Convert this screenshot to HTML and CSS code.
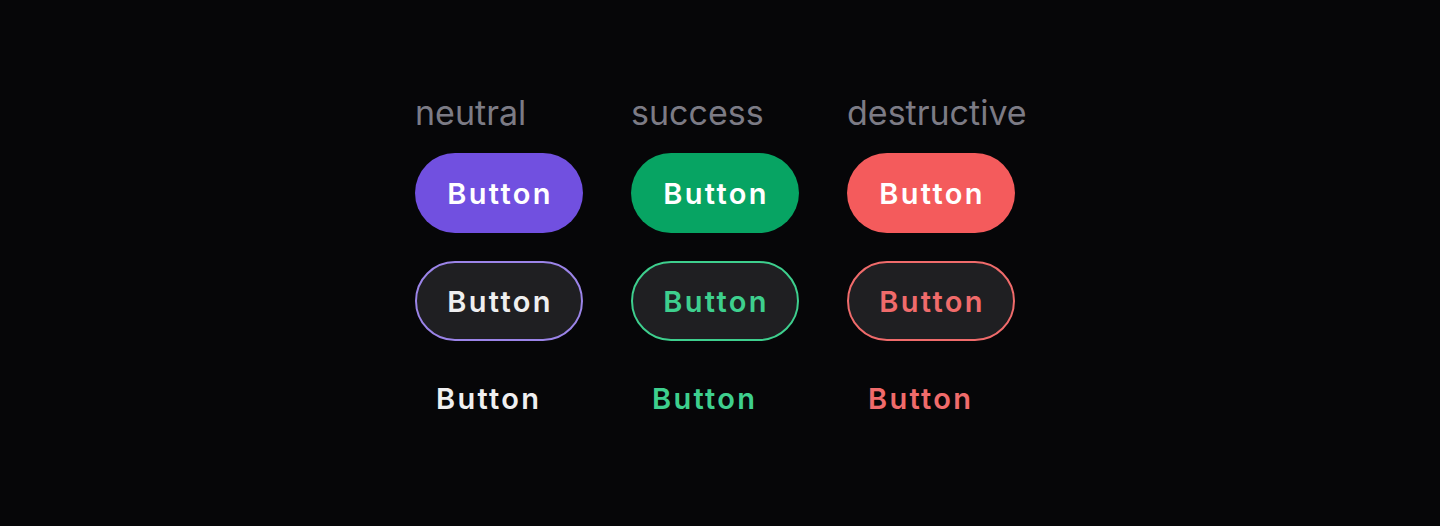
FILE: index.html
```html
<!DOCTYPE html>
<html>
<head>
<meta charset="utf-8">
<link rel="stylesheet" href="styles.css">
</head>
<body>
<main class="grid">
  <div class="col">
    <div class="label">neutral</div>
    <button class="btn solid neutral">Button</button>
    <button class="btn outline neutral">Button</button>
    <button class="btn text neutral">Button</button>
  </div>
  <div class="col">
    <div class="label">success</div>
    <button class="btn solid success">Button</button>
    <button class="btn outline success">Button</button>
    <button class="btn text success">Button</button>
  </div>
  <div class="col">
    <div class="label">destructive</div>
    <button class="btn solid destructive">Button</button>
    <button class="btn outline destructive">Button</button>
    <button class="btn text destructive">Button</button>
  </div>
</main>
</body>
</html>
```
FILE: styles.css
```css
html, body {
  margin: 0;
  height: 100%;
  background: #060608;
}
body {
  font-family: Inter, "Noto Sans", sans-serif;
  padding: 92px 0 0 414px;
  box-sizing: border-box;
}
.grid {
  display: flex;
  gap: 48px;
}
.col {
  width: 168px;
  display: flex;
  flex-direction: column;
  align-items: flex-start;
}
.label {
  font-size: 34px;
  line-height: 42px;
  color: #7c7b85;
  letter-spacing: 0;
  white-space: nowrap;
  margin-bottom: 19px;
  margin-left: 1px;
}
.btn {
  font-family: inherit;
  font-size: 29px;
  font-weight: 600;
  height: 80px;
  width: 168px;
  border-radius: 40px;
  border: none;
  padding: 0 0 0 2px;
  margin-left: 1px;
  box-sizing: border-box;
  color: #fff;
  letter-spacing: 2.3px;
}
.solid { margin-bottom: 28px; }
.solid.neutral { background: #7150e0; }
.solid.success { background: #07a463; }
.solid.destructive { background: #f45b5c; }
.outline {
  background: #1f1f22;
  border: 2px solid;
  margin-bottom: 28px;
}
.outline.neutral { border-color: #9b84e8; color: #efeff0; }
.outline.success { border-color: #3ecf8e; color: #3ecf8e; }
.outline.destructive { border-color: #f06b6b; color: #f06b6b; }
.text {
  background: none;
  width: auto;
  height: 58px;
  padding: 0 18px 0 21px;
}
.text.neutral { color: #efeff0; }
.text.success { color: #3ecf8e; }
.text.destructive { color: #f06b6b; }
```
